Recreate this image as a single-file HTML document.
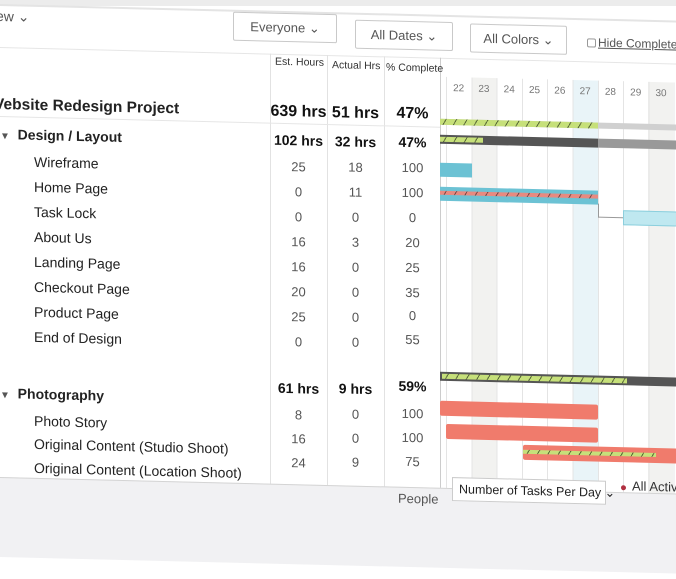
<!DOCTYPE html>
<html><head><meta charset="utf-8"><style>
*{margin:0;padding:0;box-sizing:border-box}
body{width:676px;height:507px;overflow:hidden;background:#fff;font-family:"Liberation Sans",sans-serif;color:#222;position:relative}
#w{position:absolute;left:0;top:0;width:760px;height:560px;transform:skewY(1.4deg);transform-origin:0 0}
.a{position:absolute;white-space:nowrap}
.btn{position:absolute;border:1px solid #c9c9c9;border-radius:2px;height:29px;font-size:13px;color:#555;text-align:center;line-height:27px;background:#fff}
.n{font-size:14px;color:#222}
.v{font-size:13px;color:#555;text-align:center;width:57px}
.b{font-size:14px;font-weight:bold;color:#111;text-align:center;width:57px}
.vl{position:absolute;width:1px;background:#e2e2e2}
.hatch{background:repeating-linear-gradient(120deg,#c6e07a 0 5px,#5b6b3a 5px 6px,#c6e07a 6px 9px)}
.bar{position:absolute}
</style></head><body>
<div class="a" style="left:0;top:0;width:676px;height:6px;background:#ececec"></div>
<div id="w">
<div class="a" style="left:0;top:4px;width:760px;height:2px;background:#e4e4e4"></div>
<div class="a" style="left:-4px;top:8px;font-size:14px;color:#555">ew &#8964;</div>
<div class="btn" style="left:233px;top:6px;width:104px">Everyone &#8964;</div>
<div class="btn" style="left:355px;top:11px;width:98px">All Dates &#8964;</div>
<div class="btn" style="left:470px;top:12px;width:97px">All Colors &#8964;</div>
<div class="a" style="left:587px;top:24px;width:9px;height:9px;border:1px solid #999;border-radius:2px"></div>
<div class="a" style="left:598px;top:21px;font-size:12px;color:#555;text-decoration:underline">Hide Completed</div>
<div class="a" style="left:0;top:47px;width:760px;height:1px;background:#e6e6e6"></div>
<div class="vl" style="left:270px;top:47px;height:440px"></div>
<div class="vl" style="left:327px;top:47px;height:440px"></div>
<div class="vl" style="left:384px;top:47px;height:440px"></div>
<div class="vl" style="left:440px;top:47px;height:440px;background:#ccc"></div>
<div class="a" style="left:275px;top:49px;font-size:10.5px;color:#333">Est. Hours</div>
<div class="a" style="left:332px;top:51px;font-size:10.5px;color:#333">Actual Hrs</div>
<div class="a" style="left:386px;top:52px;font-size:10.5px;color:#333">% Complete</div>
<div class="a" style="left:472px;top:66px;width:25px;height:420px;background:#f2f2f0"></div>
<div class="a" style="left:573px;top:66px;width:25px;height:420px;background:#e9f4f8"></div>
<div class="a" style="left:648px;top:66px;width:25px;height:420px;background:#f2f2f0"></div>
<div class="a" style="left:446px;top:66px;width:320px;height:420px;background:repeating-linear-gradient(90deg,#e4e4e4 0 1px,transparent 1px 25.3px)"></div>
<div class="a" style="left:446px;top:72px;font-size:10px;color:#777">
<span style="display:inline-block;width:25.3px;text-align:center">22</span><span style="display:inline-block;width:25.3px;text-align:center">23</span><span style="display:inline-block;width:25.3px;text-align:center">24</span><span style="display:inline-block;width:25.3px;text-align:center">25</span><span style="display:inline-block;width:25.3px;text-align:center">26</span><span style="display:inline-block;width:25.3px;text-align:center">27</span><span style="display:inline-block;width:25.3px;text-align:center">28</span><span style="display:inline-block;width:25.3px;text-align:center">29</span><span style="display:inline-block;width:25.3px;text-align:center">30</span></div>
<div class="a" style="left:-6px;top:96px;font-size:15.5px;font-weight:bold">Vebsite Redesign Project</div>
<div class="a b" style="left:270px;top:96px;font-size:16px">639 hrs</div>
<div class="a b" style="left:327px;top:96px;font-size:16px">51 hrs</div>
<div class="a b" style="left:384px;top:95px;font-size:16px">47%</div>
<div class="a" style="left:0;top:116px;width:440px;height:1px;background:#e6e6e6"></div>
<div class="a" style="left:0;top:126px;font-size:14px;font-weight:bold;color:#222"><span style="font-size:10px;color:#555">&#9660;</span>&nbsp;&nbsp;Design / Layout</div>
<div class="a b" style="left:270px;top:125px">102 hrs</div>
<div class="a b" style="left:327px;top:125px">32 hrs</div>
<div class="a b" style="left:384px;top:124px">47%</div>
<div class="bar" style="left:440px;top:108px;width:300px;height:6px;background:#d0d0d0"></div>
<div class="bar hatch" style="left:440px;top:108px;width:158px;height:6px"></div>
<div class="bar" style="left:440px;top:124px;width:158px;height:9px;background:#555"></div>
<div class="bar" style="left:598px;top:124px;width:150px;height:9px;background:#999"></div>
<div class="bar hatch" style="left:440px;top:126px;width:43px;height:5px"></div>

<div class="a n" style="left:34px;top:153px">Wireframe</div><div class="a v" style="left:270px;top:152px">25</div><div class="a v" style="left:327px;top:151px">18</div><div class="a v" style="left:384px;top:150px">100</div>
<div class="a n" style="left:34px;top:178px">Home Page</div><div class="a v" style="left:270px;top:177px">0</div><div class="a v" style="left:327px;top:176px">11</div><div class="a v" style="left:384px;top:175px">100</div>
<div class="a n" style="left:34px;top:203px">Task Lock</div><div class="a v" style="left:270px;top:202px">0</div><div class="a v" style="left:327px;top:201px">0</div><div class="a v" style="left:384px;top:200px">0</div>
<div class="a n" style="left:34px;top:228px">About Us</div><div class="a v" style="left:270px;top:227px">16</div><div class="a v" style="left:327px;top:226px">3</div><div class="a v" style="left:384px;top:225px">20</div>
<div class="a n" style="left:34px;top:253px">Landing Page</div><div class="a v" style="left:270px;top:252px">16</div><div class="a v" style="left:327px;top:251px">0</div><div class="a v" style="left:384px;top:250px">25</div>
<div class="a n" style="left:34px;top:278px">Checkout Page</div><div class="a v" style="left:270px;top:277px">20</div><div class="a v" style="left:327px;top:276px">0</div><div class="a v" style="left:384px;top:275px">35</div>
<div class="a n" style="left:34px;top:303px">Product Page</div><div class="a v" style="left:270px;top:302px">25</div><div class="a v" style="left:327px;top:301px">0</div><div class="a v" style="left:384px;top:298px">0</div>
<div class="a n" style="left:34px;top:328px">End of Design</div><div class="a v" style="left:270px;top:327px">0</div><div class="a v" style="left:327px;top:326px">0</div><div class="a v" style="left:384px;top:322px">55</div>
<div class="bar" style="left:440px;top:152px;width:32px;height:14px;background:#6cc2d4"></div>
<div class="bar" style="left:440px;top:176px;width:158px;height:14px;background:#6cc2d4"></div>
<div class="bar" style="left:440px;top:180px;width:158px;height:4px;background:repeating-linear-gradient(120deg,#e88a80 0 5px,#7a4a48 5px 6px,#e88a80 6px 9px)"></div>
<div class="bar" style="left:598px;top:189px;width:1px;height:14px;background:#999"></div>
<div class="bar" style="left:598px;top:202px;width:25px;height:1px;background:#999"></div>
<div class="bar" style="left:623px;top:195px;width:130px;height:15px;background:#bfe8f0;border:1px solid #8ccfdd"></div>

<div class="a" style="left:0;top:385px;font-size:14px;font-weight:bold;color:#222"><span style="font-size:10px;color:#555">&#9660;</span>&nbsp;&nbsp;Photography</div>
<div class="a b" style="left:270px;top:373px">61 hrs</div>
<div class="a b" style="left:327px;top:372px">9 hrs</div>
<div class="a b" style="left:384px;top:368px">59%</div>
<div class="bar" style="left:440px;top:361px;width:320px;height:9px;background:#555"></div>
<div class="bar hatch" style="left:442px;top:363px;width:185px;height:5px"></div>
<div class="a n" style="left:34px;top:412px">Photo Story</div><div class="a v" style="left:270px;top:400px">8</div><div class="a v" style="left:327px;top:398px">0</div><div class="a v" style="left:384px;top:396px">100</div>
<div class="a n" style="left:34px;top:435px">Original Content (Studio Shoot)</div><div class="a v" style="left:270px;top:424px">16</div><div class="a v" style="left:327px;top:422px">0</div><div class="a v" style="left:384px;top:420px">100</div>
<div class="a n" style="left:34px;top:459px">Original Content (Location Shoot)</div><div class="a v" style="left:270px;top:448px">24</div><div class="a v" style="left:327px;top:446px">9</div><div class="a v" style="left:384px;top:444px">75</div>
<div class="bar" style="left:440px;top:390px;width:158px;height:15px;background:#f07b6c;border-radius:2px"></div>
<div class="bar" style="left:446px;top:413px;width:152px;height:15px;background:#f07b6c;border-radius:2px"></div>
<div class="bar" style="left:523px;top:432px;width:240px;height:15px;background:#f07b6c;border-radius:2px"></div>
<div class="bar hatch" style="left:523px;top:437px;width:133px;height:4px"></div>
<div class="a" style="left:-10px;top:477px;width:780px;height:80px;background:#f1f1f3;border-top:1px solid #d4d4d4"></div>
<div class="a" style="left:398px;top:481px;font-size:13px;color:#555">People</div>
<div class="a" style="left:452px;top:466px;width:154px;height:24px;background:#fff;border:1px solid #ccc;font-size:12.5px;line-height:22px;padding-left:6px;color:#222">Number of Tasks Per Day &#8964;</div>
<div class="a" style="left:621px;top:470px;width:5px;height:5px;border-radius:50%;background:#b03040"></div>
<div class="a" style="left:632px;top:463px;font-size:13px;color:#333">All Active</div>
</div>
</body></html>
